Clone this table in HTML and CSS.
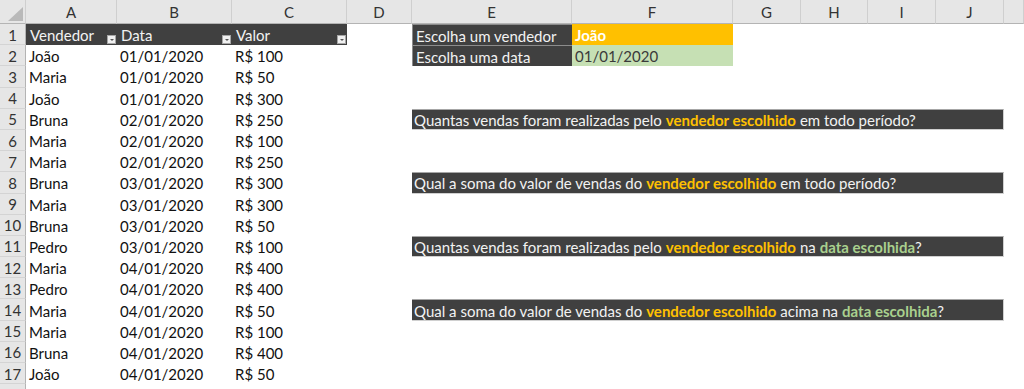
FILE: index.html
```html
<!DOCTYPE html>
<html lang="pt-BR">
<head>
  <meta charset="UTF-8">
  <meta name="viewport" content="width=device-width, initial-scale=1.0">
  <title>Vendas</title>
  <link rel="stylesheet" href="styles.css">
</head>
<body>
  <div class="sheet" id="sheet"></div>

  <script>
    const columns = ["A", "B", "C", "D", "E", "F", "G", "H", "I", "J", ""];

    const sales = [
      ["João", "01/01/2020", "R$ 100"],
      ["Maria", "01/01/2020", "R$ 50"],
      ["João", "01/01/2020", "R$ 300"],
      ["Bruna", "02/01/2020", "R$ 250"],
      ["Maria", "02/01/2020", "R$ 100"],
      ["Maria", "02/01/2020", "R$ 250"],
      ["Bruna", "03/01/2020", "R$ 300"],
      ["Maria", "03/01/2020", "R$ 300"],
      ["Bruna", "03/01/2020", "R$ 50"],
      ["Pedro", "03/01/2020", "R$ 100"],
      ["Maria", "04/01/2020", "R$ 400"],
      ["Pedro", "04/01/2020", "R$ 400"],
      ["Maria", "04/01/2020", "R$ 50"],
      ["Maria", "04/01/2020", "R$ 100"],
      ["Bruna", "04/01/2020", "R$ 400"],
      ["João", "04/01/2020", "R$ 50"]
    ];

    const seller = '<b class="seller">vendedor escolhido</b>';
    const date = '<b class="date">data escolhida</b>';
    const questions = {
      5: `Quantas vendas foram realizadas pelo ${seller} em todo período?`,
      8: `Qual a soma do valor de vendas do ${seller} em todo período?`,
      11: `Quantas vendas foram realizadas pelo ${seller} na ${date}?`,
      14: `Qual a soma do valor de vendas do ${seller} acima na ${date}?`
    };

    const sheet = document.getElementById("sheet");

    function cell(className, html) {
      const el = document.createElement("div");
      el.className = className;
      if (html !== undefined) el.innerHTML = html;
      sheet.appendChild(el);
      return el;
    }

    // column letters
    cell("corner");
    columns.forEach(letter => cell("col-head", letter));

    for (let row = 1; row <= 18; row++) {
      // last row is only partly on screen, leave its number out
      cell("row-head", row < 18 ? row : "");

      if (row === 1) {
        ["Vendedor", "Data", "Valor"].forEach(title => {
          cell("cell head", `${title}<span class="filter"></span>`);
        });
      } else if (sales[row - 2]) {
        sales[row - 2].forEach(value => cell("cell", value));
      } else {
        cell("cell"); cell("cell"); cell("cell");
      }

      cell("cell"); // D

      if (row === 1) {
        cell("cell label", "Escolha um vendedor");
        cell("cell pick-seller", "João");
        ["G", "H", "I", "J"].forEach(() => cell("cell"));
      } else if (row === 2) {
        cell("cell label", "Escolha uma data");
        cell("cell pick-date", "01/01/2020");
        ["G", "H", "I", "J"].forEach(() => cell("cell"));
      } else if (questions[row]) {
        cell("cell question", questions[row]);
      } else {
        ["E", "F", "G", "H", "I", "J"].forEach(() => cell("cell"));
      }

      cell("cell"); // K
    }
  </script>
</body>
</html>
```

FILE: styles.css
```css
body {
  margin: 0;
  background-color: #ffffff;
  font-family: Lato, "Open Sans", sans-serif;
  font-size: 15px;
  overflow: hidden;
}
.sheet {
  display: grid;
  grid-template-columns: 26px 91px 115px 115px 65px 160px 161px 68px 67px 68px 68px 20px;
  grid-template-rows: 24px;
  grid-auto-rows: 21.2px;
}
.corner {
  position: relative;
  background-color: #e6e6e6;
  border-right: 1px solid #cfcfcf;
  border-bottom: 1px solid #b4b4b4;
}
.corner::after {
  content: "";
  position: absolute;
  right: 2px;
  bottom: 2px;
  border-style: solid;
  border-width: 0 0 14px 15px;
  border-color: transparent transparent #b9b9b9 transparent;
}
.col-head {
  display: flex;
  align-items: center;
  justify-content: center;
  background-color: #e6e6e6;
  color: #333333;
  border-right: 1px solid #cfcfcf;
  border-bottom: 1px solid #b4b4b4;
  padding-top: 1px;
}
.row-head {
  display: flex;
  align-items: center;
  justify-content: center;
  background-color: #e6e6e6;
  color: #333333;
  border-right: 1px solid #b4b4b4;
  border-bottom: 1px solid #d4d4d4;
  padding-top: 1px;
}
.cell {
  position: relative;
  display: flex;
  align-items: center;
  padding: 1px 3px 0;
  color: #111111;
  white-space: nowrap;
}
.head, .label, .question {
  background-color: #404040;
  color: #f2f2f2;
}
.head {
  padding-left: 4px;
}
.filter {
  position: absolute;
  right: 1px;
  bottom: 1px;
  width: 9px;
  height: 9px;
  box-sizing: border-box;
  background-color: #f0f0f0;
  border: 1px solid #a6a6a6;
}
.filter::after {
  content: "";
  position: absolute;
  left: 2px;
  top: 3px;
  border-style: solid;
  border-width: 2px 2px 0 2px;
  border-color: #555555 transparent transparent transparent;
}
.label {
  border-top: 1px solid #8c8c8c;
  border-left: 1px solid #8c8c8c;
}
.pick-seller {
  background-color: #ffc000;
  color: #ffffff;
  font-weight: bold;
}
.pick-date {
  background-color: #c6e0b4;
  color: #3a3a3a;
}
.question {
  grid-column: span 6;
  border-top: 1px solid #a6a6a6;
  border-right: 1px solid #d0d0d0;
  border-bottom: 1px solid #d0d0d0;
  padding-left: 2px;
}
.seller {
  color: #ffc000;
  margin: 0 4px;
}
.date {
  color: #a9d08e;
  margin-left: 4px;
}
```
